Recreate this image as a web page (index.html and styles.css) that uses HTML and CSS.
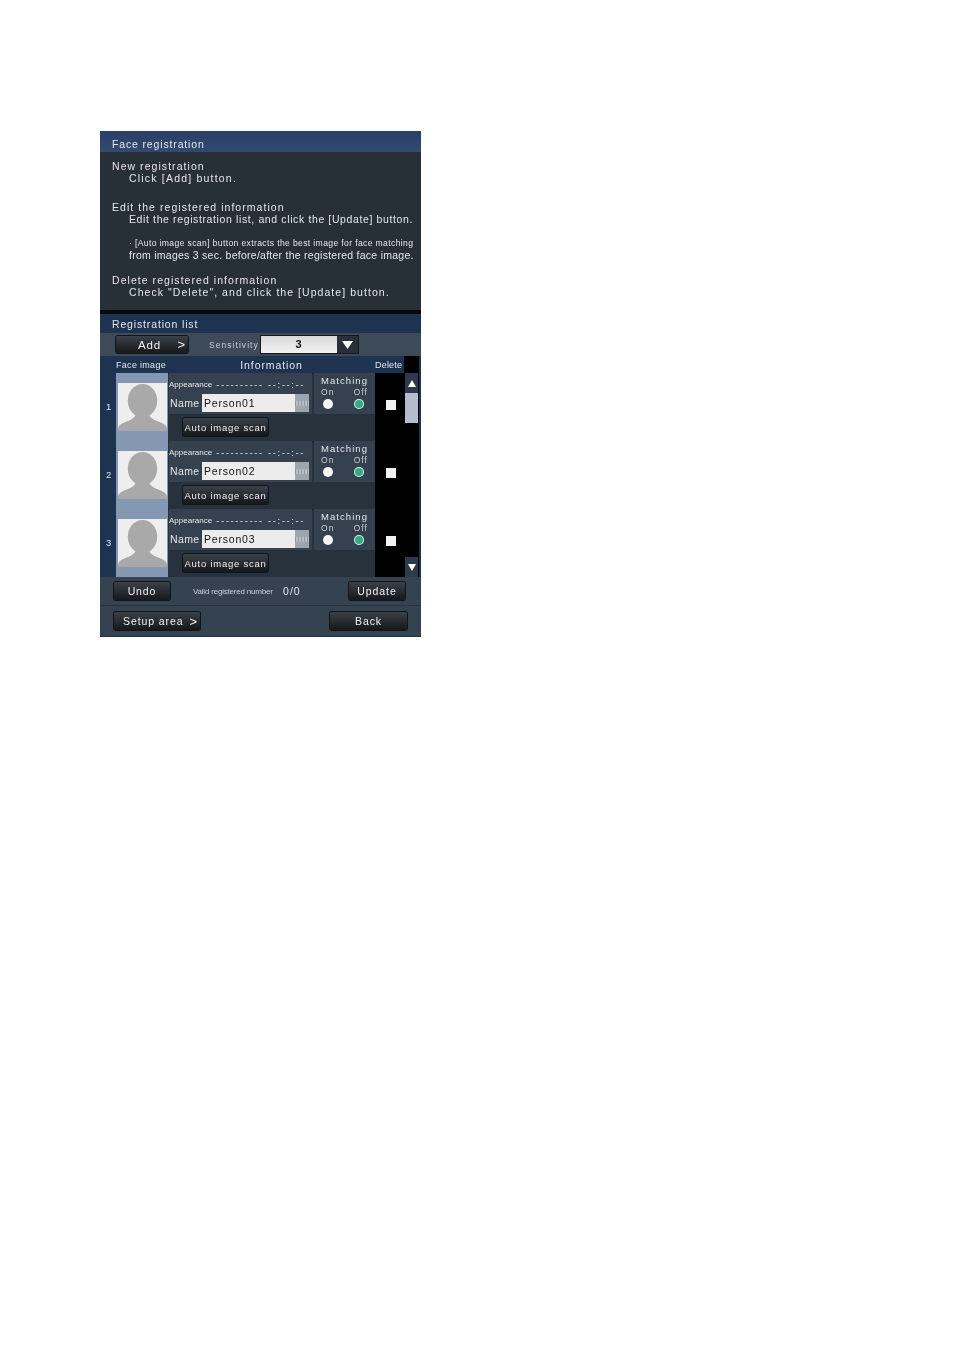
FILE: index.html
```html
<!doctype html>
<html>
<head>
  <meta charset="utf-8">
  <title>Face registration</title>
  <link rel="stylesheet" href="styles.css">
</head>
<body>
  <div class="panel">
    <div class="titlebar">Face registration</div>
    <div class="help">
      <p class="h1">New registration</p>
      <p class="h2 wide">Click [Add] button.</p>
      <p class="h1 gap1">Edit the registered information</p>
      <p class="h2 tight">Edit the registration list, and click the [Update] button.</p>
      <p class="h2 small gap2">&#183; [Auto image scan] button extracts the best image for face matching</p>
      <p class="h2 tighter">from images 3 sec. before/after the registered face image.</p>
      <p class="h1 gap3">Delete registered information</p>
      <p class="h2">Check "Delete", and click the [Update] button.</p>
    </div>
    <div class="divider"></div>
    <div class="list">
      <div class="listtitle">Registration list</div>
      <div class="toolbar">
        <button class="btn addbtn"><span>Add</span><span class="chev">&gt;</span></button>
        <span class="senslabel">Sensitivity</span>
        <div class="select">
          <span class="selectval">3</span>
          <span class="selectarrow"><svg width="11" height="8" viewBox="0 0 11 8"><path d="M0 0H11L5.5 8Z" fill="#fff"/></svg></span>
        </div>
      </div>
      <div class="tablehead">
        <span class="col-face">Face image</span>
        <span class="col-info">Information</span>
        <span class="col-del">Delete</span>
        <span class="col-end"></span>
      </div>
      <div class="tablebody">
        <div class="rows">
          <div class="row">
            <div class="num">1</div>
            <div class="faceimg"><svg class="face" viewBox="0 0 50 49"><rect width="50" height="49" fill="#eeeeee"/><ellipse cx="25" cy="18" rx="15" ry="17" fill="#a9a9a9"/><path d="M19 30H31C32 36 38 38 43 40C47 42 50 43 50 47V49H0V47C0 43 3 42 7 40C12 38 18 36 19 30Z" fill="#a9a9a9"/></svg></div>
            <div class="info">
              <div class="infotop">
                <div class="appear"><span class="applabel">Appearance</span><span>---------- --:--:--</span></div>
                <div class="namerow"><span class="namelabel">Name</span><div class="namefield"><span class="nameval">Person01</span><span class="kbd"></span></div></div>
              </div>
              <button class="btn scanbtn">Auto image scan</button>
            </div>
            <div class="matching">
              <div class="mtitle">Matching</div>
              <div class="mopts"><span>On</span><span>Off</span></div>
              <div class="mopts"><span class="radio"></span><span class="radio on"></span></div>
            </div>
            <div class="del"><span class="check"></span></div>
          </div>
          <div class="row">
            <div class="num">2</div>
            <div class="faceimg"><svg class="face" viewBox="0 0 50 49"><rect width="50" height="49" fill="#eeeeee"/><ellipse cx="25" cy="18" rx="15" ry="17" fill="#a9a9a9"/><path d="M19 30H31C32 36 38 38 43 40C47 42 50 43 50 47V49H0V47C0 43 3 42 7 40C12 38 18 36 19 30Z" fill="#a9a9a9"/></svg></div>
            <div class="info">
              <div class="infotop">
                <div class="appear"><span class="applabel">Appearance</span><span>---------- --:--:--</span></div>
                <div class="namerow"><span class="namelabel">Name</span><div class="namefield"><span class="nameval">Person02</span><span class="kbd"></span></div></div>
              </div>
              <button class="btn scanbtn">Auto image scan</button>
            </div>
            <div class="matching">
              <div class="mtitle">Matching</div>
              <div class="mopts"><span>On</span><span>Off</span></div>
              <div class="mopts"><span class="radio"></span><span class="radio on"></span></div>
            </div>
            <div class="del"><span class="check"></span></div>
          </div>
          <div class="row">
            <div class="num">3</div>
            <div class="faceimg"><svg class="face" viewBox="0 0 50 49"><rect width="50" height="49" fill="#eeeeee"/><ellipse cx="25" cy="18" rx="15" ry="17" fill="#a9a9a9"/><path d="M19 30H31C32 36 38 38 43 40C47 42 50 43 50 47V49H0V47C0 43 3 42 7 40C12 38 18 36 19 30Z" fill="#a9a9a9"/></svg></div>
            <div class="info">
              <div class="infotop">
                <div class="appear"><span class="applabel">Appearance</span><span>---------- --:--:--</span></div>
                <div class="namerow"><span class="namelabel">Name</span><div class="namefield"><span class="nameval">Person03</span><span class="kbd"></span></div></div>
              </div>
              <button class="btn scanbtn">Auto image scan</button>
            </div>
            <div class="matching">
              <div class="mtitle">Matching</div>
              <div class="mopts"><span>On</span><span>Off</span></div>
              <div class="mopts"><span class="radio"></span><span class="radio on"></span></div>
            </div>
            <div class="del"><span class="check"></span></div>
          </div>
        </div>
        <div class="scrollbar">
          <span class="sbtn"><svg width="8" height="7" viewBox="0 0 8 7"><path d="M4 0L8 7H0Z" fill="#fff"/></svg></span>
          <span class="thumb"></span>
          <span class="sbtn bottom"><svg width="8" height="7" viewBox="0 0 8 7"><path d="M0 0H8L4 7Z" fill="#fff"/></svg></span>
        </div>
        <div class="rightedge"></div>
      </div>
      <div class="footer1">
        <button class="btn undobtn">Undo</button>
        <span class="validlabel">Valid registered number</span>
        <span class="validval">0/0</span>
        <button class="btn updatebtn">Update</button>
      </div>
      <div class="footer2">
        <button class="btn setupbtn"><span>Setup area</span><span class="chev">&gt;</span></button>
        <button class="btn backbtn">Back</button>
      </div>
    </div>
  </div>
</body>
</html>
```
FILE: styles.css
```css
body {
  margin: 0;
  background: #ffffff;
  font-family: "Liberation Sans", Arial, sans-serif;
}
p {
  margin: 0;
}
.panel {
  width: 321px;
  margin: 131px 0 0 100px;
  background: #272f37;
  color: #e4e7ea;
  font-size: 10.5px;
  letter-spacing: 1.05px;
  filter: blur(0.35px);
}
.titlebar {
  height: 21px;
  line-height: 26px;
  padding-left: 12px;
  letter-spacing: 0.85px;
  background: linear-gradient(to bottom, #2a3f66, #34496f);
  box-sizing: border-box;
}
.help {
  height: 158px;
  padding: 8px 0 0 12px;
  box-sizing: border-box;
}
.help p {
  line-height: 12px;
  white-space: nowrap;
}
.h2 {
  padding-left: 17px;
}
.wide {
  letter-spacing: 1.2px;
}
.tight {
  letter-spacing: 0.62px;
}
.tighter {
  letter-spacing: 0.26px;
}
.small {
  font-size: 8.6px;
  letter-spacing: 0.36px;
}
.gap1 {
  margin-top: 17px;
}
.gap2 {
  margin-top: 12px;
}
.gap3 {
  margin-top: 13px;
}
.divider {
  height: 4px;
  background: #05070a;
}
.list {
  background: #1d3350;
}
.listtitle {
  height: 19px;
  line-height: 20px;
  padding-left: 12px;
  letter-spacing: 0.85px;
}
.btn {
  border: 0;
  padding: 0;
  font-family: inherit;
  font-size: 10.5px;
  letter-spacing: 0.9px;
  color: #f0f0f0;
  background: linear-gradient(to bottom, #3b4148, #15181c);
  border-radius: 2px;
  box-shadow: 0 0 0 1px #10151b;
}
.toolbar {
  height: 23px;
  display: flex;
  align-items: center;
  background: #3d4b59;
}
.addbtn {
  width: 72px;
  height: 17px;
  margin-left: 16px;
  display: flex;
  justify-content: space-between;
  padding: 0 2px 0 22px;
  box-sizing: border-box;
  align-items: center;
  font-size: 11.5px;
}
.senslabel {
  margin-left: 21px;
  width: 51px;
  font-size: 8.5px;
  color: #c8ced4;
}
.select {
  display: flex;
  height: 19px;
  width: 99px;
  background: #14181c;
  box-sizing: border-box;
  padding: 1px;
}
.selectval {
  width: 76px;
  text-align: center;
  line-height: 17px;
  font-size: 11px;
  font-weight: bold;
  color: #111;
  background: linear-gradient(to bottom, #d8d8d8, #f2f2f2);
}
.selectarrow {
  flex: 1;
  display: flex;
  align-items: center;
  justify-content: center;
  background: #2a3037;
}
.tablehead {
  display: flex;
  height: 17px;
  line-height: 18px;
  font-size: 9px;
  letter-spacing: 0.3px;
}
.col-face {
  width: 68px;
  padding-left: 16px;
  box-sizing: border-box;
}
.col-info {
  width: 207px;
  text-align: center;
  font-size: 10.5px;
  letter-spacing: 0.9px;
}
.col-del {
  width: 29px;
  letter-spacing: 0.2px;
  font-size: 9px;
  white-space: nowrap;
}
.col-end {
  width: 15px;
  background: #000;
}
.tablebody {
  display: flex;
  height: 204px;
}
.rows {
  width: 304px;
}
.row {
  display: flex;
  height: 68px;
  background: #28323c;
  box-shadow: inset 0 1px 0 #16202b;
}
.num {
  width: 16px;
  box-sizing: border-box;
  padding: 28px 0 0 6px;
  background: #1d3350;
  line-height: 12px;
  font-size: 9.5px;
  letter-spacing: 0;
}
.faceimg {
  width: 52px;
  background: #8497b3;
  display: flex;
  align-items: center;
  justify-content: center;
}
.face {
  width: 49px;
  height: 48px;
  display: block;
}
.info {
  width: 146px;
  padding-left: 1px;
  box-sizing: border-box;
}
.infotop {
  width: 143px;
  height: 41px;
  background: #35414e;
}
.appear {
  height: 19px;
  display: flex;
  align-items: flex-end;
  gap: 4px;
  font-size: 9.5px;
  letter-spacing: 1.6px;
  line-height: 15px;
  white-space: nowrap;
}
.applabel {
  font-size: 8px;
  letter-spacing: 0;
}
.namerow {
  display: flex;
  align-items: center;
  height: 20px;
  margin-top: 1px;
  padding-left: 1px;
}
.namelabel {
  width: 32px;
  font-size: 10.5px;
  letter-spacing: 0.4px;
}
.namefield {
  display: flex;
  height: 18px;
  width: 107px;
  background: #ececec;
}
.nameval {
  flex: 1;
  color: #111;
  line-height: 18px;
  padding-left: 2px;
  font-size: 10.5px;
  letter-spacing: 0.8px;
}
.kbd {
  width: 14px;
  background: repeating-linear-gradient(to right, #8e9aa5 0, #8e9aa5 1px, #b8bfc5 1px, #b8bfc5 3px);
  background-size: 100% 5px;
  background-position: center;
  background-repeat: no-repeat;
  background-color: #9ea6ad;
}
.scanbtn {
  display: block;
  width: 85px;
  height: 18px;
  margin: 4px 0 0 14px;
  font-size: 9.5px;
  letter-spacing: 0.75px;
  white-space: nowrap;
}
.matching {
  width: 61px;
  height: 41px;
  background: #35414e;
  box-sizing: border-box;
  padding-top: 2px;
  text-align: center;
  font-size: 9.5px;
}
.mtitle {
  line-height: 12px;
  letter-spacing: 1.05px;
}
.mopts {
  display: flex;
  justify-content: space-between;
  padding: 0 7px 0 7px;
  font-size: 8.5px;
  line-height: 10px;
  height: 10px;
  color: #c9ced3;
}
.radio {
  width: 10px;
  height: 10px;
  margin: 2px 4px 0 2px;
  border-radius: 50%;
  background: #f5f5f5;
}
.radio.on {
  margin: 2px 4px 0 0;
  background: #34a98a;
  box-shadow: inset 0 0 0 1px #d8e8e4;
}
.del {
  width: 29px;
  background: #000;
  display: flex;
  justify-content: center;
  padding: 27px 0 0 3px;
  box-sizing: border-box;
}
.check {
  width: 10px;
  height: 10px;
  background: #f2f2f2;
}
.scrollbar {
  width: 15px;
  background: #000;
  display: flex;
  flex-direction: column;
  align-items: center;
}
.sbtn {
  width: 13px;
  height: 20px;
  background: #2c3a4a;
  display: flex;
  align-items: center;
  justify-content: center;
}
.bottom {
  margin-top: auto;
}
.thumb {
  width: 13px;
  height: 30px;
  background: #b4bdcb;
}
.rightedge {
  width: 2px;
  background: #1d3350;
}
.footer1 {
  height: 28px;
  display: flex;
  align-items: center;
  background: #354250;
}
.undobtn {
  width: 56px;
  height: 18px;
  margin-left: 14px;
}
.validlabel {
  margin-left: 23px;
  font-size: 8px;
  letter-spacing: -0.2px;
  color: #ccd1d6;
  width: 90px;
  white-space: nowrap;
}
.validval {
  font-size: 10.5px;
}
.updatebtn {
  width: 56px;
  height: 18px;
  margin-left: auto;
  margin-right: 16px;
}
.footer2 {
  height: 32px;
  display: flex;
  align-items: center;
  justify-content: space-between;
  padding: 0 14px;
  background: #354250;
  box-shadow: inset 0 1px 0 #28323d, inset 0 -1px 0 #1d3350;
}
.setupbtn {
  width: 86px;
  height: 18px;
  display: flex;
  align-items: center;
  justify-content: space-between;
  padding: 0 2px 0 9px;
  box-sizing: border-box;
}
.chev {
  font-size: 13px;
}
.backbtn {
  width: 77px;
  height: 18px;
}
```
